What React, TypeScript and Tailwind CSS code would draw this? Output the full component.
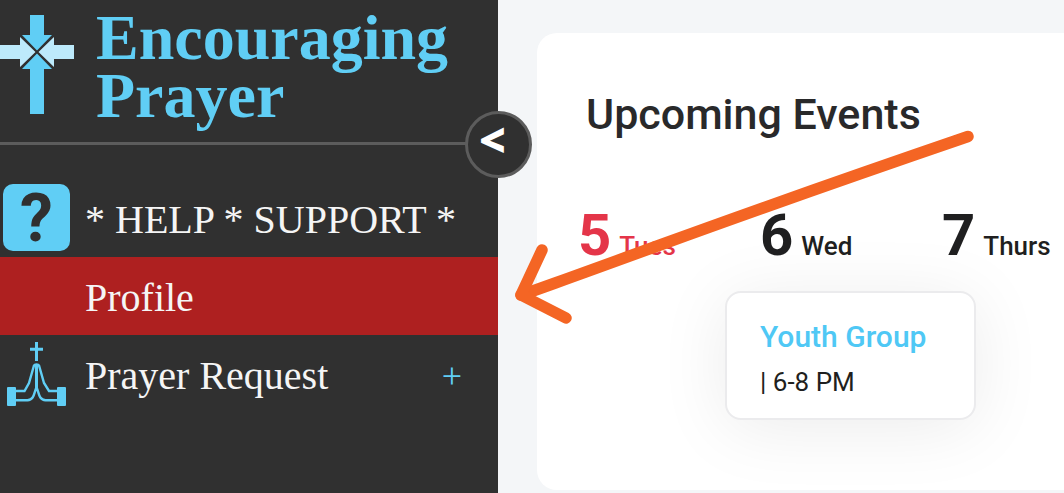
import React from "react";

function CrossLogo() {
  return (
    <svg width="74" height="100" viewBox="0 0 74 100" className="shrink-0" aria-hidden="true">
      <path d="M30 0h14v20h8L37 35.500 22 20h8z" fill="#60cef5" />
      <path d="M22 54 37 38.500 52 54h-8v45H30V54z" fill="#60cef5" />
      <path d="M0 30h20v-8l15.500 15L20 52v-8H0z" fill="#bdeafb" />
      <path d="M74 30H54v-8L38.500 37 54 52v-8h20z" fill="#bdeafb" />
    </svg>
  );
}

function PrayingHands() {
  return (
    <svg width="60" height="64" viewBox="0 0 60 64" fill="none" stroke="#60cef5" strokeWidth="2.400" aria-hidden="true">
      <path d="M29.500 0v19M23 7.200h13" strokeWidth="3" />
      <rect x="0" y="45" width="9" height="19" rx="1" fill="#60cef5" stroke="none" />
      <rect x="50" y="45" width="9" height="19" rx="1" fill="#60cef5" stroke="none" />
      <path d="M9 49h8.500L22 41 27 23.500Q27.500 22.500 29.500 22.500T32 23.500L37 41l5 8h8" />
      <path d="M9 58.200h11.500c7-.2 6.500-8 9-13 2.500 5 2 12.800 9 13H50" />
      <path d="M29.500 23v24" strokeWidth="3" />
    </svg>
  );
}

function HelpIcon() {
  return (
    <span
      aria-hidden="true"
      className="mb-[2px] flex size-[67px] items-center justify-center rounded-[10px] bg-[#60cef5] pt-[3px] font-[Roboto,sans-serif] text-[66px] leading-[64px] font-bold text-[#303030]"
    >
      ?
    </span>
  );
}

type ItemProps = {
  label: string;
  icon?: React.ReactNode;
  active?: boolean;
  expandable?: boolean;
};

function MenuItem({ label, icon, active, expandable }: ItemProps) {
  return (
    <li>
      <a
        href="#"
        aria-current={active ? "page" : undefined}
        className={`flex h-[78px] items-center pr-9 text-[40px] leading-none text-[#f5f5f5] ${active ? "bg-[#ae2020]" : ""}`}
      >
        <span className="flex w-[73px] shrink-0 justify-center">{icon}</span>
        <span className="ml-3 pt-1 whitespace-nowrap">{label}</span>
        {expandable && <span className="ml-auto pt-1 text-[36px] text-[#60cef5]">+</span>}
      </a>
    </li>
  );
}

function Day({ number, name, today }: { number: string; name: string; today?: boolean }) {
  return (
    <div className={`flex w-[182px] shrink-0 items-baseline gap-2 ${today ? "text-[#e43549]" : "text-[#1f1f20]"}`}>
      <span className="text-[58px] leading-[58px] font-bold">{number}</span>
      <span className="text-[26px] leading-[58px] font-medium">{name}</span>
    </div>
  );
}

export default function App() {
  return (
    <div className="relative flex min-h-screen overflow-hidden bg-[#f4f6f8]">
      <aside className="relative w-[498px] shrink-0 bg-[#303030] font-['Liberation_Serif',serif]">
        <header className="flex h-[145px] items-start gap-[22px] border-b-[3px] border-[#5c5c5c] pt-[9px] text-[#60cef5]">
          <div className="pt-[6px]">
            <CrossLogo />
          </div>
          <h1 className="text-[64px] leading-[58px] font-bold">
            Encouraging
            <br />
            Prayer
          </h1>
        </header>
        <button
          type="button"
          aria-label="Collapse menu"
          className="absolute top-[111px] -right-[34px] z-10 flex size-[67px] items-center justify-center rounded-full border-[3px] border-[#5c5c5c] bg-[#303030] pr-3 pb-3 font-['Open_Sans',sans-serif] text-[46px] leading-none font-extrabold text-white"
        >
          &lt;
        </button>
        <nav className="pt-[34px]">
          <ul>
            <MenuItem label="* HELP * SUPPORT *" icon={<HelpIcon />} />
            <MenuItem label="Profile" active />
            <MenuItem label="Prayer Request" icon={<PrayingHands />} expandable />
          </ul>
        </nav>
      </aside>

      <main className="min-w-0 flex-1 pt-[33px] pb-[3px] pl-[39px] font-[Roboto,sans-serif]">
        <section className="h-full overflow-hidden rounded-l-[20px] bg-white pt-[54px] pl-[41px]">
          <h2 className="pl-2 text-[43px] leading-[54px] font-medium whitespace-nowrap text-[#29292a]">
            Upcoming Events
          </h2>
          <div className="mt-[65px] flex">
            <Day number="5" name="Tues" today />
            <Day number="6" name="Wed" />
            <Day number="7" name="Thurs" />
          </div>
          <article className="mt-4 ml-[147px] h-[129px] w-[251px] rounded-[16px] border-2 border-[#ebebed] bg-white pt-6 pl-[33px] shadow-[0_8px_70px_rgba(0,0,0,0.08)]">
            <h3 className="text-[30px] leading-[40px] font-medium text-[#4fc8f5]">Youth Group</h3>
            <p className="mt-2 text-[26px] leading-[34px] text-[#1f1f20]">| 6-8 PM</p>
          </article>
        </section>
      </main>

      <svg
        width="460"
        height="194"
        viewBox="514 130 460 194"
        className="pointer-events-none absolute top-[130px] left-[514px] z-20"
        fill="none"
        stroke="#f46524"
        strokeWidth="11.500"
        strokeLinecap="round"
        strokeLinejoin="round"
        aria-hidden="true"
      >
        <path d="M968 136.500Q800 194 660 245T521 295" />
        <path d="M542 250 521 295 566 318" />
      </svg>
    </div>
  );
}
